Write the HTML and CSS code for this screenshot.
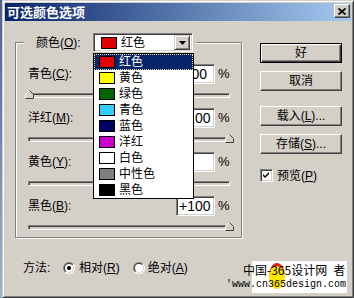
FILE: index.html
```html
<!DOCTYPE html>
<html lang="zh-CN">
<head>
<meta charset="utf-8">
<title>可选颜色选项</title>
<link rel="stylesheet" href="styles.css">
</head>
<body>
<div class="window">
  <div class="titlebar">
    <span class="title">可选颜色选项</span>
    <span class="close"><svg width="8" height="7" viewBox="0 0 8 7"><path d="M0.5 0.5 L7.5 6.5 M7.5 0.5 L0.5 6.5" stroke="#000" stroke-width="1.7" fill="none"/></svg></span>
  </div>
  <div class="dlg">
    <div class="main">
      <div class="group">
        <div class="legend">
          <span class="lbl">颜色(<u>O</u>):</span>
          <div class="combo">
            <span class="sw red"></span><span class="ctext">红色</span>
            <span class="cbtn"><svg width="7" height="4" viewBox="0 0 7 4"><path d="M0 0h7L3.5 4z" fill="#000"/></svg></span>
            <ul class="list">
              <li class="item sel"><span class="sw red"></span><span>红色</span></li>
              <li class="item"><span class="sw yellow"></span><span>黄色</span></li>
              <li class="item"><span class="sw green"></span><span>绿色</span></li>
              <li class="item"><span class="sw cyan"></span><span>青色</span></li>
              <li class="item"><span class="sw blue"></span><span>蓝色</span></li>
              <li class="item"><span class="sw magenta"></span><span>洋红</span></li>
              <li class="item"><span class="sw white"></span><span>白色</span></li>
              <li class="item"><span class="sw gray"></span><span>中性色</span></li>
              <li class="item"><span class="sw black"></span><span>黑色</span></li>
            </ul>
          </div>
        </div>

        <div class="row first">
          <span class="rlbl">青色(<u>C</u>):</span>
          <span class="num">-100</span><span class="pct">%</span>
        </div>
        <div class="slider"><div class="track"></div><svg class="thumb at-min" width="9" height="9" viewBox="0 0 9 9"><path d="M0.5 8.5V4.5L4.5 0.5L8.5 4.5V8.5Z" fill="#d4d0c8"/><path d="M0.5 8.5V4.5L4.5 0.5" stroke="#fff" fill="none"/><path d="M4.5 0.5L8.5 4.5V8.5H0.5" stroke="#404040" fill="none"/></svg></div>

        <div class="row">
          <span class="rlbl">洋红(<u>M</u>):</span>
          <span class="num">+100</span><span class="pct">%</span>
        </div>
        <div class="slider"><div class="track"></div><svg class="thumb at-max" width="9" height="9" viewBox="0 0 9 9"><path d="M0.5 8.5V4.5L4.5 0.5L8.5 4.5V8.5Z" fill="#d4d0c8"/><path d="M0.5 8.5V4.5L4.5 0.5" stroke="#fff" fill="none"/><path d="M4.5 0.5L8.5 4.5V8.5H0.5" stroke="#404040" fill="none"/></svg></div>

        <div class="row">
          <span class="rlbl">黄色(<u>Y</u>):</span>
          <span class="num">0</span><span class="pct">%</span>
        </div>
        <div class="slider"><div class="track"></div><svg class="thumb at-mid" width="9" height="9" viewBox="0 0 9 9"><path d="M0.5 8.5V4.5L4.5 0.5L8.5 4.5V8.5Z" fill="#d4d0c8"/><path d="M0.5 8.5V4.5L4.5 0.5" stroke="#fff" fill="none"/><path d="M4.5 0.5L8.5 4.5V8.5H0.5" stroke="#404040" fill="none"/></svg></div>

        <div class="row">
          <span class="rlbl">黑色(<u>B</u>):</span>
          <span class="num">+100</span><span class="pct">%</span>
        </div>
        <div class="slider"><div class="track"></div><svg class="thumb at-max" width="9" height="9" viewBox="0 0 9 9"><path d="M0.5 8.5V4.5L4.5 0.5L8.5 4.5V8.5Z" fill="#d4d0c8"/><path d="M0.5 8.5V4.5L4.5 0.5" stroke="#fff" fill="none"/><path d="M4.5 0.5L8.5 4.5V8.5H0.5" stroke="#404040" fill="none"/></svg></div>
      </div>

      <div class="side">
        <div class="btn default">好</div>
        <div class="btn gap-s">取消</div>
        <div class="btn gap-l">载入(<u>L</u>)...</div>
        <div class="btn gap-s">存储(<u>S</u>)...</div>
        <div class="check gap-l">
          <span class="cbox"><svg width="7" height="7" viewBox="0 0 7 7"><path d="M0 2L2 4L6 0V2L2 6L0 4Z" fill="#000"/></svg></span>
          <span>预览(<u>P</u>)</span>
        </div>
      </div>
    </div>

    <div class="method">
      <span class="mlbl">方法:</span>
      <svg class="radio r1" width="12" height="12" viewBox="0 0 12 12">
        <defs>
          <linearGradient id="go" x1="0" y1="0" x2="1" y2="1"><stop offset="0.5" stop-color="#808080"/><stop offset="0.5" stop-color="#ffffff"/></linearGradient>
          <linearGradient id="gi" x1="0" y1="0" x2="1" y2="1"><stop offset="0.5" stop-color="#404040"/><stop offset="0.5" stop-color="#d4d0c8"/></linearGradient>
        </defs>
        <circle cx="6" cy="6" r="6" fill="url(#go)"/><circle cx="6" cy="6" r="5" fill="url(#gi)"/><circle cx="6" cy="6" r="4" fill="#fff"/><circle cx="6" cy="6" r="2" fill="#000"/>
      </svg>
      <span class="rtext">相对(<u>R</u>)</span>
      <svg class="radio r2" width="12" height="12" viewBox="0 0 12 12">
        <circle cx="6" cy="6" r="6" fill="url(#go)"/><circle cx="6" cy="6" r="5" fill="url(#gi)"/><circle cx="6" cy="6" r="4" fill="#fff"/>
      </svg>
      <span class="rtext">绝对(<u>A</u>)</span>
    </div>
  </div>

  <div class="watermark">
    <div class="wm-bg"></div>
    <div class="wm-logo"></div>
    <div class="wm-l1"><span>中国-365设计网</span><span class="wm-end">者</span></div>
    <div class="wm-l2">'www.cn365design.com</div>
  </div>
</div>
</body>
</html>
```

FILE: styles.css
```css
* { box-sizing: border-box; }
html, body { margin: 0; padding: 0; }
body {
  width: 354px;
  height: 298px;
  overflow: hidden;
  background: linear-gradient(#4a6290, #9fb2d0);
  font: 12px/14px "Liberation Sans", "Noto Sans CJK SC", sans-serif;
  color: #000;
}
u { text-decoration: underline; text-underline-offset: 1px; }

.window {
  position: relative;
  margin-left: 2px;
  width: 352px;
  height: 298px;
  background: #d4d0c8;
  border: 1px solid;
  border-color: #d4d0c8 #404040 #404040 #d4d0c8;
  box-shadow: inset 1px 1px #fff, inset -1px -1px #808080;
  padding: 2px;
  display: flex;
  flex-direction: column;
}

.titlebar {
  height: 18px;
  flex: none;
  display: flex;
  align-items: flex-start;
  background: linear-gradient(90deg, #0a246a, #a6caf0);
}
.title {
  color: #fff;
  font: bold 13px/17px "Noto Sans CJK SC", sans-serif;
  padding-left: 2px;
}
.close {
  margin-left: auto;
  margin-right: 1px;
  margin-top: 1px;
  width: 16px;
  height: 14px;
  background: #d4d0c8;
  border: 1px solid;
  border-color: #fff #404040 #404040 #fff;
  box-shadow: inset -1px -1px #808080;
  display: flex;
  align-items: center;
  justify-content: center;
}
.close svg { display: block; margin-right: 1px; }

.dlg { flex: 1; display: flex; flex-direction: column; }
.main { display: flex; align-items: flex-start; }

.group {
  margin-left: 10px;
  margin-top: 21px;
  width: 227px;
  height: 196px;
  border: 1px solid #808080;
  box-shadow: inset 1px 1px #fff, 1px 1px #fff;
  padding: 0 10px 0 12px;
  display: flex;
  flex-direction: column;
}

.legend {
  align-self: flex-start;
  margin-top: -10px;
  margin-left: -4px;
  padding: 0 3px 0 12px;
  height: 19px;
  background: #d4d0c8;
  display: flex;
  align-items: center;
  position: relative;
  z-index: 2;
}
.lbl { width: 57px; }
.combo {
  position: relative;
  width: 100px;
  height: 19px;
  background: #fff;
  border: 1px solid;
  border-color: #808080 #fff #fff #808080;
  box-shadow: inset 1px 1px #404040, inset -1px -1px #d4d0c8;
  padding: 2px 2px 2px 7px;
  display: flex;
  align-items: center;
}
.ctext { margin-left: 4px; }
.cbtn {
  margin-left: auto;
  width: 16px;
  height: 15px;
  background: #d4d0c8;
  border: 1px solid;
  border-color: #d4d0c8 #404040 #404040 #d4d0c8;
  box-shadow: inset 1px 1px #fff, inset -1px -1px #808080;
  display: flex;
  align-items: center;
  justify-content: center;
}
.cbtn svg { display: block; }

.sw {
  display: block;
  flex: none;
  width: 16px;
  height: 12px;
  border: 1px solid #000;
}
.red { background: #e00000; }
.yellow { background: #ffff00; }
.green { background: #006400; }
.cyan { background: #33ccff; }
.blue { background: #000066; }
.magenta { background: #cc00cc; }
.white { background: #ffffff; }
.gray { background: #7f7f7f; }
.black { background: #000000; }

.list {
  position: absolute;
  left: -1px;
  top: 19px;
  width: 101px;
  margin: 0;
  padding: 0;
  list-style: none;
  background: #fff;
  border: 1px solid #000;
  z-index: 5;
}
.item {
  height: 16px;
  display: flex;
  align-items: center;
  padding-left: 5px;
  gap: 4px;
}
.item.sel {
  background: #0a246a;
  color: #fff;
  outline: 1px dotted #e8d890;
  outline-offset: -1px;
}

.row {
  display: flex;
  align-items: center;
  height: 20px;
  margin-top: 8px;
}
.row.first { margin-top: 12px; }
.rlbl { flex: 1; }
.num {
  width: 39px;
  height: 20px;
  background: #fff;
  border: 1px solid;
  border-color: #808080 #fff #fff #808080;
  box-shadow: inset 1px 1px #404040, inset -1px -1px #d4d0c8;
  padding: 1px 0 0 2px;
  font: 14px/16px "Liberation Sans", sans-serif;
}
.pct {
  width: 16px;
  padding-left: 3px;
  font: 13px/16px "Liberation Sans", sans-serif;
}

.slider {
  position: relative;
  height: 11px;
  margin-top: 5px;
}
.track {
  margin-top: 4px;
  height: 5px;
  margin-right: 1px;
  background: #d4d0c8;
  border: 1px solid;
  border-color: #808080 #fff #fff #808080;
  box-shadow: inset 1px 1px #404040;
}
.thumb { position: absolute; top: 1px; display: block; }
.at-min { left: -3px; }
.at-mid { left: 97px; }
.at-max { left: 197px; }

.side {
  margin-left: 18px;
  margin-top: 22px;
  width: 82px;
  display: flex;
  flex-direction: column;
}
.btn {
  height: 20px;
  background: #d4d0c8;
  border: 1px solid;
  border-color: #fff #404040 #404040 #fff;
  box-shadow: inset -1px -1px #808080;
  display: flex;
  align-items: center;
  justify-content: center;
}
.btn.default {
  border: 1px solid #000;
  box-shadow: inset 1px 1px #fff, inset -1px -1px #404040, inset -2px -2px #808080;
}
.gap-s { margin-top: 8px; }
.gap-l { margin-top: 15px; }
.check {
  display: flex;
  align-items: center;
  height: 13px;
  gap: 4px;
}
.cbox {
  width: 13px;
  height: 13px;
  background: #fff;
  border: 1px solid;
  border-color: #808080 #fff #fff #808080;
  box-shadow: inset 1px 1px #404040, inset -1px -1px #d4d0c8;
  display: flex;
  align-items: center;
  justify-content: center;
}
.cbox svg { display: block; }

.method {
  margin-top: 23px;
  margin-left: 18px;
  height: 14px;
  display: flex;
  align-items: center;
}
.mlbl { width: 40px; }
.radio { display: block; flex: none; }
.r1 { margin-right: 4px; }
.r2 { margin-left: 13px; margin-right: 3px; }

.watermark {
  position: absolute;
  left: 223px;
  top: 260px;
  width: 124px;
  height: 33px;
  color: #000;
  white-space: nowrap;
}
.wm-bg {
  position: absolute;
  left: 26px;
  top: 0;
  width: 95px;
  height: 32px;
  background: #fff;
}
.wm-logo {
  position: absolute;
  left: 43px;
  top: 2px;
  width: 16px;
  height: 26px;
  border-radius: 50%;
  background: #ffe600;
  border-top: 3px solid #e02020;
}
.wm-l1 {
  position: relative;
  padding-left: 17px;
  margin-top: 1px;
  display: flex;
  font: 12px/15px "Noto Sans CJK SC", sans-serif;
}
.wm-end { margin-left: 6px; }
.wm-l2 {
  position: relative;
  font: 10px/14px "Liberation Mono", monospace;
  margin-top: 1px;
}
```
